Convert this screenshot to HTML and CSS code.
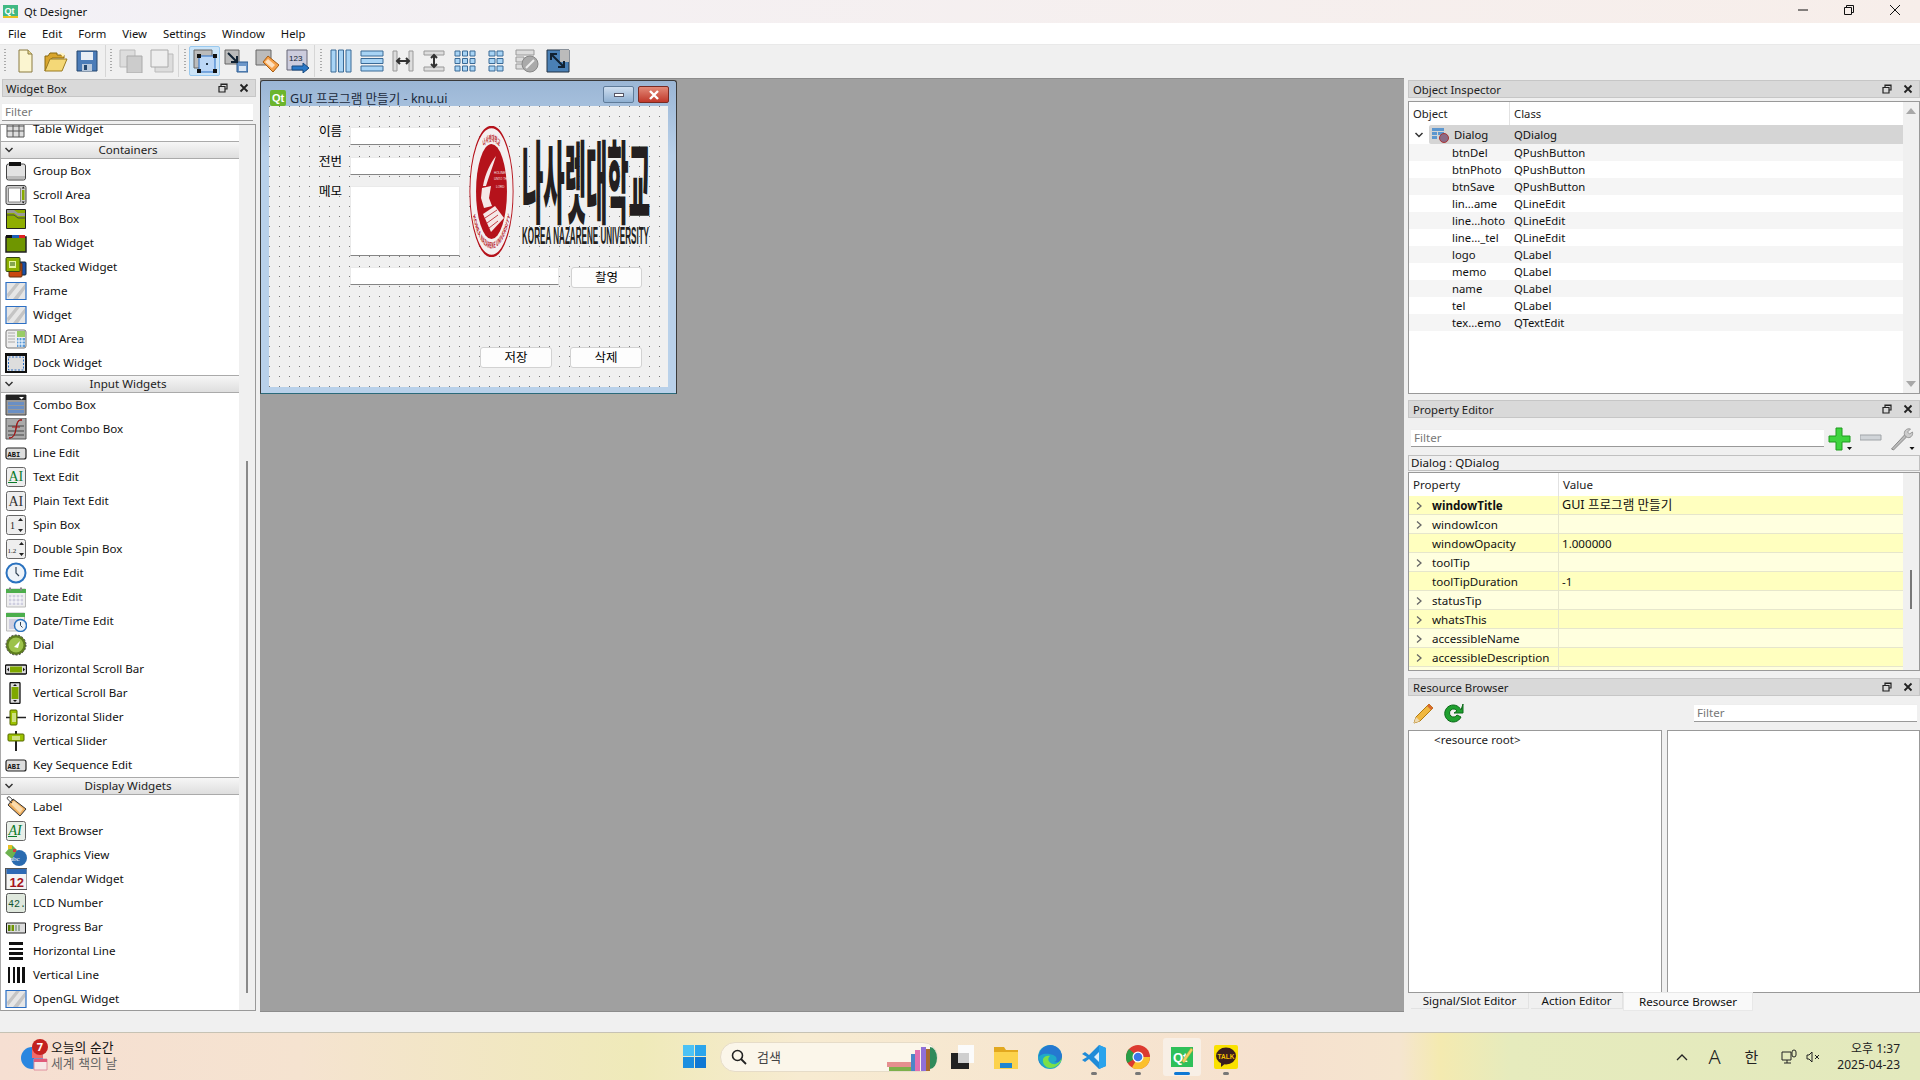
FILE: index.html
```html
<!DOCTYPE html>
<html lang="ko">
<head>
<meta charset="utf-8">
<title>Qt Designer</title>
<link rel="stylesheet" href="styles.css">
</head>
<body>
<svg class="sprite" xmlns="http://www.w3.org/2000/svg">
  <symbol id="chev-d" viewBox="0 0 10 10"><path d="M1.5 3 5 6.5 8.500 3" fill="none" stroke="#333" stroke-width="1.500"/></symbol>
  <symbol id="chev-r" viewBox="0 0 10 10"><path d="M3 1.500 7 5 3 8.500" fill="none" stroke="#666" stroke-width="1.300"/></symbol>
  <symbol id="float" viewBox="0 0 10 10"><path d="M3 3V1h6v5H7M1 3.500h6V9H1z" fill="none" stroke="#222" stroke-width="1.200"/><path d="M3 1h6v1H3zM1 3h6v1H1z" fill="#222"/></symbol>
  <symbol id="close" viewBox="0 0 10 10"><path d="M1.500 1.500l7 7M8.500 1.500l-7 7" stroke="#222" stroke-width="1.800"/></symbol>
  <symbol id="i-table" viewBox="0 0 22 22"><path d="M2 3h17v16H2z" fill="#ddd" stroke="#555"/><path d="M2 8h17M2 13h17M8 3v16M14 3v16" stroke="#555"/></symbol>
  <symbol id="i-group" viewBox="0 0 22 22"><rect x="1.500" y="4" width="19" height="16" rx="2" fill="#e2e2e2" stroke="#444"/><path d="M4 2h12v4H4z" fill="#111"/><path d="M2 16h18v3H2z" fill="#bbb"/></symbol>
  <symbol id="i-scroll" viewBox="0 0 22 22"><rect x="1" y="1.500" width="20" height="19" rx="2" fill="#ccc" stroke="#444"/><path d="M3.500 4h12v14h-12z" fill="#fff" stroke="#888"/><path d="M17 6h2.500v10H17z" fill="#8a0"/><path d="M18.200 2.500l-1.500 2h3zM18.200 19.500l-1.500-2h3z" fill="#111"/></symbol>
  <symbol id="i-toolbox" viewBox="0 0 22 22"><path d="M1.500 1.500h19v19h-19z" fill="#8fae00" stroke="#222"/><path d="M2 2h7l4 3h7v3H13L9 5H2z" fill="#999"/><path d="M2 7h7l4 3h7" fill="none" stroke="#444"/></symbol>
  <symbol id="i-tab" viewBox="0 0 22 22"><path d="M1 5h20v15H1z" fill="#6f9600" stroke="#222" stroke-width="1.500"/><path d="M7 3h7v3H7z" fill="#1b5db5"/><path d="M14 3h6v3h-6z" fill="#d22"/><path d="M1 3h6v3H1z" fill="#111"/></symbol>
  <symbol id="i-stack" viewBox="0 0 22 22"><rect x="8" y="6" width="13" height="13" rx="1" fill="#1a50a8" stroke="#123"/><rect x="4" y="7" width="13" height="14" rx="1" fill="#c9470f" stroke="#631"/><rect x="1" y="1.500" width="14" height="14" rx="1" fill="#8cb000" stroke="#341"/><path d="M4 5h7v7H4z" fill="#e6f5a0"/><path d="M5 7h5M5 9h5" stroke="#250"/></symbol>
  <symbol id="i-frame" viewBox="0 0 22 22"><path d="M1 2.500h20v17H1z" fill="#e6e6e6" stroke="#2c6fc4" stroke-width="1.200"/><path d="M2 14 11 3h4L3 18zM8 19 20 4v5L13 19z" fill="#c4c4c4"/></symbol>
  <symbol id="i-mdi" viewBox="0 0 22 22"><rect x="1" y="2" width="20" height="18" rx="2" fill="#eee" stroke="#777"/><path d="M12 3h8v6h-8z" fill="#9c6"/><path d="M12 10h8v9h-8z" fill="#5a9ad8"/><path d="M3 5h7M3 8h7M3 11h7M3 14h7" stroke="#aaa"/><path d="M14 10v9M17 10v9M12 13h8M12 16h8" stroke="#fff"/></symbol>
  <symbol id="i-dock" viewBox="0 0 22 22"><path d="M0 1h22v20H0z" fill="#111"/><path d="M2 4h18v15H2z" fill="#e4e4e4"/><path d="M3.500 5h15v13h-15z" fill="#ddd" stroke="#2c6fc4" stroke-dasharray="2 1.500"/></symbol>
  <symbol id="i-combo" viewBox="0 0 22 22"><path d="M1 1h20v20H1z" fill="#999" stroke="#444"/><path d="M1 1h20v5H1z" fill="#222"/><path d="M14 3h5l-2.500 2.500z" fill="#fff"/><path d="M3 8h16v3H3zM3 12h16v3H3zM3 16h16v3H3z" fill="#6a8fc4"/></symbol>
  <symbol id="i-font" viewBox="0 0 22 22"><path d="M1 0h20v21H1z" fill="#aaa" stroke="#555"/><path d="M3 8h16M3 13h16M3 17h16" stroke="#777" stroke-width="2"/><path d="M17 2c-4-1-5 2-6 8s-2 10-7 10c4 0 6-3 7-9s2-9 6-9z" fill="#a01818" stroke="#a01818"/><path d="M7 9h8" stroke="#a01818"/></symbol>
  <symbol id="i-line" viewBox="0 0 22 22"><rect x="1" y="6" width="20" height="11" rx="2" fill="#ddd" stroke="#222" stroke-width="1.200"/><text x="2.500" y="14.500" class="ico-text">ABI</text></symbol>
  <symbol id="i-text" viewBox="0 0 22 22"><rect x="1.500" y="1.500" width="19" height="19" rx="2" fill="#eee" stroke="#666"/><text x="3.500" y="15" class="ico-serif green">AI</text><path d="M3 16.500h9" stroke="#0a7a2a"/></symbol>
  <symbol id="i-plain" viewBox="0 0 22 22"><rect x="1.500" y="1.500" width="19" height="19" rx="2" fill="#eee" stroke="#666"/><text x="3.500" y="15.500" class="ico-serif">AI</text></symbol>
  <symbol id="i-spin" viewBox="0 0 22 22"><rect x="1.500" y="1.500" width="19" height="19" rx="2" fill="#eee" stroke="#666"/><text x="5" y="15" class="ico-small">1</text><path d="M15.500 4l-2.500 3h5zM15.500 18l-2.500-3h5z" fill="#222"/></symbol>
  <symbol id="i-dspin" viewBox="0 0 22 22"><rect x="1.500" y="1.500" width="19" height="19" rx="2" fill="#eee" stroke="#666"/><text x="2.500" y="14.500" class="ico-tiny">1.2</text><path d="M16.500 4l-2.500 3h5zM16.500 18l-2.500-3h5z" fill="#222"/></symbol>
  <symbol id="i-time" viewBox="0 0 22 22"><circle cx="11" cy="11" r="9.500" fill="#eef3f8" stroke="#2a72bf" stroke-width="2"/><path d="M11 5v6l3 3" fill="none" stroke="#345" stroke-width="1.200"/></symbol>
  <symbol id="i-date" viewBox="0 0 22 22"><path d="M1.500 3h19v18h-19z" fill="#eee" stroke="#bbb"/><path d="M1 3h20v4H1z" fill="#4cae4c"/><path d="M4 1.500h2v3H4zM15 1.500h2v3h-2z" fill="#888"/><path d="M4 9h14v10H4z" fill="#cfcfe0"/><path d="M7 9v10M11 9v10M15 9v10M4 12h14M4 16h14" stroke="#fff"/></symbol>
  <symbol id="i-datetime" viewBox="0 0 22 22"><path d="M1.500 3h18v18h-18z" fill="#eee" stroke="#bbb"/><path d="M1 3h19v4H1z" fill="#4cae4c"/><path d="M4 9h14v10H4z" fill="#cfcfe0"/><circle cx="15.500" cy="15.500" r="6" fill="#eef3f8" stroke="#2a72bf" stroke-width="1.500"/><path d="M15.500 12v3.500l2 2" fill="none" stroke="#345"/></symbol>
  <symbol id="i-dial" viewBox="0 0 22 22"><circle cx="11" cy="11" r="10" fill="#5d7d1d" stroke="#444" stroke-dasharray="2 1.500"/><circle cx="11" cy="11" r="7.500" fill="#9cc24a"/><path d="M9 13l6-6-2 7z" fill="#fff"/></symbol>
  <symbol id="i-hsb" viewBox="0 0 22 22"><rect x="0.500" y="7" width="21" height="9" rx="1" fill="#ddd" stroke="#111" stroke-width="1.300"/><path d="M5 8.500h12v6H5z" fill="#7fa800"/><path d="M2 11.500l2-2v4zM20 11.500l-2-2v4z" fill="#111"/></symbol>
  <symbol id="i-vsb" viewBox="0 0 22 22"><rect x="5" y="0.500" width="10" height="21" rx="1" fill="#ddd" stroke="#111" stroke-width="1.300"/><path d="M6.500 5h7v12h-7z" fill="#7fa800"/><path d="M10 2l-2 2h4zM10 20l-2-2h4z" fill="#111"/></symbol>
  <symbol id="i-hsl" viewBox="0 0 22 22"><path d="M1 11.500h20" stroke="#222" stroke-width="1.500"/><rect x="5" y="4" width="7" height="15" rx="1" fill="#9cc200" stroke="#560"/><path d="M8 7v9M10 7v9" stroke="#fff"/></symbol>
  <symbol id="i-vsl" viewBox="0 0 22 22"><path d="M11 1v20" stroke="#222" stroke-width="2"/><rect x="3" y="4" width="16" height="7" rx="1" fill="#9cc200" stroke="#560"/><path d="M7 7h8M7 9h8" stroke="#fff"/></symbol>
  <symbol id="i-tag" viewBox="0 0 22 22"><path d="M8 3 21 13l-6 7L3 9z" fill="#f0b060" stroke="#333"/><path d="M9 5 18 13l-3 4-9-9z" fill="#fbdcae"/><path d="M7 7C3 4 1 2 3 1s4 2 5 4" fill="none" stroke="#333"/></symbol>
  <symbol id="i-browser" viewBox="0 0 22 22"><rect x="1.500" y="1.500" width="19" height="19" rx="2" fill="#e8efe8" stroke="#666"/><text x="3.500" y="14.500" class="ico-serif green ital">AI</text><path d="M3 16.500h9" stroke="#0a7a2a"/></symbol>
  <symbol id="i-graphics" viewBox="0 0 22 22"><circle cx="14" cy="14" r="8" fill="#2a6bb0"/><path d="M0 9 7 1l5 5-5 9z" fill="#6db24f"/><path d="M3 1h4v4H3z" fill="#e8c020"/><path d="M8 5h3v3H8z" fill="#d04040"/><text x="5" y="17" class="ico-tiny white">abc</text></symbol>
  <symbol id="i-cal" viewBox="0 0 22 22"><path d="M0 0h22v22H0z" fill="#555"/><path d="M1.500 1h20v20h-20z" fill="#f4f4f4"/><path d="M1.500 1h20v5h-20z" fill="#2e6ab5"/><text x="4.500" y="18.500" class="ico-cal">12</text></symbol>
  <symbol id="i-lcd" viewBox="0 0 22 22"><rect x="1.500" y="1.500" width="19" height="19" rx="2" fill="#dfe8dd" stroke="#555"/><text x="3" y="14.500" class="ico-lcd">42.</text></symbol>
  <symbol id="i-progress" viewBox="0 0 22 22"><path d="M1.500 7h19v10h-19z" fill="#ddd" stroke="#222"/><path d="M3 9h2.500v6H3z" fill="#567a00"/><path d="M6.500 9H9v6H6.500z" fill="#6f9600"/><path d="M10 9h2v6h-2zM13 9h2v6h-2z" fill="#9a9"/></symbol>
  <symbol id="i-hline" viewBox="0 0 22 22"><path d="M4 2h14v3H4zM4 8h14v2H4zM4 12h14v3H4zM4 17h14v3H4z" fill="#111"/></symbol>
  <symbol id="i-vline" viewBox="0 0 22 22"><path d="M3 3h2v16H3zM8 3h2v16H8zM12 3h3v16h-3zM17 3h3v16h-3z" fill="#111"/></symbol>
  <symbol id="t-new" viewBox="0 0 24 24"><path d="M6 1h9l4 4v18H6z" fill="#fbf5d0" stroke="#8a7a40"/><path d="M15 1v4h4" fill="#e8d890" stroke="#8a7a40"/></symbol>
  <symbol id="t-open" viewBox="0 0 24 24"><path d="M1 22V7h3l2-3h7v2h7v3H8z" fill="#d9a52c" stroke="#8a6a10"/><path d="M1 22 6 10h17l-5 12z" fill="#f4d877" stroke="#9a7a20"/><path d="M15 3l6 2-2 3z" fill="#fff3c0"/></symbol>
  <symbol id="t-save" viewBox="0 0 24 24"><path d="M2 2h20v20H2z" fill="#4b7cb8" stroke="#24476f"/><path d="M6 3h12v8H6z" fill="#e8eef5"/><path d="M7 15h10v7H7z" fill="#b9c9dc"/><path d="M9 16h3v5H9z" fill="#24476f"/></symbol>
  <symbol id="t-copy1" viewBox="0 0 24 24"><path d="M1 1h15v17H1z" fill="#ddd" stroke="#bbb"/><path d="M8 7h15v17H8z" fill="#ccc" stroke="#aaa"/></symbol>
  <symbol id="t-copy2" viewBox="0 0 24 24"><path d="M5 5h18v18H5z" fill="#ddd" stroke="#bbb"/><path d="M1 1h17v17H1z" fill="#eee" stroke="#aaa"/></symbol>
  <symbol id="t-edit" viewBox="0 0 24 24"><path d="M1 1h18v18H1z" fill="#bbb" stroke="#666"/><path d="M6 7h16v16H6z" fill="#bcd7f6" stroke="#2a6fc4"/><path d="M4 5h4v4H4zM20 5h4v4h-4zM4 20h4v4H4zM20 20h4v4h-4z" fill="#111"/><path d="M13 14h2v2h-2z" fill="#234"/></symbol>
  <symbol id="t-signal" viewBox="0 0 24 24"><path d="M1 1h14v14H1z" fill="#bbb" stroke="#666"/><path d="M13 13h11v10H13z" fill="#6d97c9" stroke="#2a5a90"/><path d="M15 17h7v5h-7z" fill="#dce8f5"/><path d="M4 4l9 9m0-6v6H7" fill="none" stroke="#123" stroke-width="2"/></symbol>
  <symbol id="t-buddy" viewBox="0 0 24 24"><path d="M1 1h15v15H1z" fill="#bbb" stroke="#666"/><path d="M13 7 24 16l-6 7L8 13z" fill="#f6a14a" stroke="#a55a10" /><path d="M13 10l7 6-3 3-7-6z" fill="#fde0c0"/></symbol>
  <symbol id="t-tab" viewBox="0 0 24 24"><path d="M1 1h20v20H1z" fill="#ccd" stroke="#667"/><text x="3" y="12" class="ico-tab">123</text><path d="M6 17h11v-3l6 5-6 5v-3H6z" fill="#2a78c8" stroke="#174a80"/></symbol>
  <symbol id="t-lh" viewBox="0 0 24 24"><path d="M2 1h5v22H2zM9.500 1h5v22h-5zM17 1h5v22h-5z" fill="#a8d4f5" stroke="#3a6a96"/></symbol>
  <symbol id="t-lv" viewBox="0 0 24 24"><path d="M1 2h22v5H1zM1 9.500h22v5H1zM1 17h22v5H1z" fill="#a8d4f5" stroke="#3a6a96"/></symbol>
  <symbol id="t-sh" viewBox="0 0 24 24"><path d="M2 2h4v20H2zM18 2h4v20h-4z" fill="#ddd" stroke="#999"/><path d="M6 12h12M9 9l-3 3 3 3M15 9l3 3-3 3" fill="none" stroke="#333" stroke-width="2"/></symbol>
  <symbol id="t-sv" viewBox="0 0 24 24"><path d="M2 2h20v4H2zM2 18h20v4H2z" fill="#ddd" stroke="#999"/><path d="M12 6v12M9 9l3-3 3 3M9 15l3 3 3-3" fill="none" stroke="#333" stroke-width="2"/></symbol>
  <symbol id="t-grid" viewBox="0 0 24 24"><path d="M2 2h5v5H2zM9.500 2h5v5h-5zM17 2h5v5h-5zM2 9.500h5v5H2zM9.500 9.500h5v5h-5zM17 9.500h5v5h-5zM2 17h5v5H2zM9.500 17h5v5h-5zM17 17h5v5h-5z" fill="#a8d4f5" stroke="#3a6a96"/></symbol>
  <symbol id="t-form" viewBox="0 0 24 24"><path d="M5 2h6v5H5zM13 2h6v5h-6zM5 9.500h6v5H5zM13 9.500h6v5h-6zM5 17h6v5H5zM13 17h6v5h-6z" fill="#a8d4f5" stroke="#3a6a96"/></symbol>
  <symbol id="t-break" viewBox="0 0 24 24"><path d="M1 1h18v5H1zM1 8h8v5H1zM1 15h8v5H1z" fill="#ddd" stroke="#999"/><circle cx="15" cy="15" r="8" fill="#aaa" stroke="#888"/><path d="M11 19l8-8" stroke="#eee" stroke-width="2"/></symbol>
  <symbol id="t-adjust" viewBox="0 0 24 24"><path d="M1 1h22v22H1z" fill="#4a80b5" stroke="#234"/><path d="M14 1h9v12H14z" fill="#bbb"/><path d="M5 5l13 13M5 11V5h6M18 12v6h-6" fill="none" stroke="#123" stroke-width="2"/></symbol>
</svg>

<header class="titlebar">
  <svg class="tb-appicon" viewBox="0 0 15 15"><path d="M0 1h15v11H0z" fill="#41b883"/><path d="M0 12h15v2H0z" fill="#e8c020"/><text x="1.500" y="10" class="qt-text">Qt</text></svg>
  <span class="titlebar-text">Qt Designer</span>
  <div class="winctl">
    <svg viewBox="0 0 12 12"><path d="M1 6h10" stroke="#111"/></svg>
    <svg viewBox="0 0 12 12"><path d="M1.500 3.500h7v7h-7zM3.500 3.500v-2h7v7h-2" fill="none" stroke="#111"/></svg>
    <svg viewBox="0 0 12 12"><path d="M1 1l10 10M11 1 1 11" stroke="#111"/></svg>
  </div>
</header>

<nav class="menubar">
  <span>File</span><span>Edit</span><span>Form</span><span>View</span><span>Settings</span><span>Window</span><span>Help</span>
</nav>

<div class="toolbar">
  <div class="tb-group tb-group-first">
    <i class="tb-handle"></i>
    <span class="tb-btn"><svg><use href="#t-new"/></svg></span>
    <span class="tb-btn"><svg><use href="#t-open"/></svg></span>
    <span class="tb-btn"><svg><use href="#t-save"/></svg></span>
  </div>
  <div class="tb-group tb-group-second">
    <i class="tb-handle"></i>
    <span class="tb-btn"><svg><use href="#t-copy1"/></svg></span>
    <span class="tb-btn"><svg><use href="#t-copy2"/></svg></span>
  </div>
  <div class="tb-group">
    <i class="tb-handle"></i>
    <span class="tb-btn tb-btn-active"><svg><use href="#t-edit"/></svg></span>
    <span class="tb-btn"><svg><use href="#t-signal"/></svg></span>
    <span class="tb-btn"><svg><use href="#t-buddy"/></svg></span>
    <span class="tb-btn"><svg><use href="#t-tab"/></svg></span>
  </div>
  <div class="tb-group tb-group-last">
    <i class="tb-handle"></i>
    <span class="tb-btn"><svg><use href="#t-lh"/></svg></span>
    <span class="tb-btn"><svg><use href="#t-lv"/></svg></span>
    <span class="tb-btn"><svg><use href="#t-sh"/></svg></span>
    <span class="tb-btn"><svg><use href="#t-sv"/></svg></span>
    <span class="tb-btn"><svg><use href="#t-grid"/></svg></span>
    <span class="tb-btn"><svg><use href="#t-form"/></svg></span>
    <span class="tb-btn"><svg><use href="#t-break"/></svg></span>
    <span class="tb-btn"><svg><use href="#t-adjust"/></svg></span>
  </div>
</div>

<main class="workspace">
  <aside class="dock-left">
    <div class="dock-title"><span>Widget Box</span><svg class="dock-float"><use href="#float"/></svg><svg class="dock-close"><use href="#close"/></svg></div>
    <div class="filter filter-left">Filter</div>
    <div class="wb">
      <div class="wb-list">
        <div class="wb-inner">
          <div class="wb-row"><svg><use href="#i-table"/></svg>Table Widget</div>
          <div class="wb-head"><svg><use href="#chev-d"/></svg><span>Containers</span></div>
          <div class="wb-row"><svg><use href="#i-group"/></svg>Group Box</div>
          <div class="wb-row"><svg><use href="#i-scroll"/></svg>Scroll Area</div>
          <div class="wb-row"><svg><use href="#i-toolbox"/></svg>Tool Box</div>
          <div class="wb-row"><svg><use href="#i-tab"/></svg>Tab Widget</div>
          <div class="wb-row"><svg><use href="#i-stack"/></svg>Stacked Widget</div>
          <div class="wb-row"><svg><use href="#i-frame"/></svg>Frame</div>
          <div class="wb-row"><svg><use href="#i-frame"/></svg>Widget</div>
          <div class="wb-row"><svg><use href="#i-mdi"/></svg>MDI Area</div>
          <div class="wb-row"><svg><use href="#i-dock"/></svg>Dock Widget</div>
          <div class="wb-head"><svg><use href="#chev-d"/></svg><span>Input Widgets</span></div>
          <div class="wb-row"><svg><use href="#i-combo"/></svg>Combo Box</div>
          <div class="wb-row"><svg><use href="#i-font"/></svg>Font Combo Box</div>
          <div class="wb-row"><svg><use href="#i-line"/></svg>Line Edit</div>
          <div class="wb-row"><svg><use href="#i-text"/></svg>Text Edit</div>
          <div class="wb-row"><svg><use href="#i-plain"/></svg>Plain Text Edit</div>
          <div class="wb-row"><svg><use href="#i-spin"/></svg>Spin Box</div>
          <div class="wb-row"><svg><use href="#i-dspin"/></svg>Double Spin Box</div>
          <div class="wb-row"><svg><use href="#i-time"/></svg>Time Edit</div>
          <div class="wb-row"><svg><use href="#i-date"/></svg>Date Edit</div>
          <div class="wb-row"><svg><use href="#i-datetime"/></svg>Date/Time Edit</div>
          <div class="wb-row"><svg><use href="#i-dial"/></svg>Dial</div>
          <div class="wb-row"><svg><use href="#i-hsb"/></svg>Horizontal Scroll Bar</div>
          <div class="wb-row"><svg><use href="#i-vsb"/></svg>Vertical Scroll Bar</div>
          <div class="wb-row"><svg><use href="#i-hsl"/></svg>Horizontal Slider</div>
          <div class="wb-row"><svg><use href="#i-vsl"/></svg>Vertical Slider</div>
          <div class="wb-row"><svg><use href="#i-line"/></svg>Key Sequence Edit</div>
          <div class="wb-head"><svg><use href="#chev-d"/></svg><span>Display Widgets</span></div>
          <div class="wb-row"><svg><use href="#i-tag"/></svg>Label</div>
          <div class="wb-row"><svg><use href="#i-browser"/></svg>Text Browser</div>
          <div class="wb-row"><svg><use href="#i-graphics"/></svg>Graphics View</div>
          <div class="wb-row"><svg><use href="#i-cal"/></svg>Calendar Widget</div>
          <div class="wb-row"><svg><use href="#i-lcd"/></svg>LCD Number</div>
          <div class="wb-row"><svg><use href="#i-progress"/></svg>Progress Bar</div>
          <div class="wb-row"><svg><use href="#i-hline"/></svg>Horizontal Line</div>
          <div class="wb-row"><svg><use href="#i-vline"/></svg>Vertical Line</div>
          <div class="wb-row"><svg><use href="#i-frame"/></svg>OpenGL Widget</div>
        </div>
      </div>
      <div class="wb-scroll"><i></i></div>
    </div>
  </aside>

  <section class="mdi">
    <div class="form-window">
      <div class="form-title">
        <span class="qt-badge">Qt</span>
        <span class="form-title-text">GUI 프로그램 만들기 - knu.ui</span>
        <span class="form-btn form-min"><i></i></span>
        <span class="form-btn form-close"><svg viewBox="0 0 12 10"><path d="M2 1l8 8M10 1 2 9" stroke="#fff" stroke-width="2.400"/></svg></span>
      </div>
      <div class="form-canvas">
        <div class="form-top">
          <div class="form-fields">
            <div class="field"><label>이름</label><div class="input"></div></div>
            <div class="field"><label>전번</label><div class="input"></div></div>
            <div class="field field-memo"><label>메모</label><div class="input input-memo"></div></div>
          </div>
          <svg class="logo" viewBox="0 0 181 131">
            <defs><path id="seal-top" d="M-50 0A50 50 0 0 1 50 0"/><path id="seal-bottom" d="M-57 0A57 57 0 0 0 57 0"/></defs>
            <g transform="translate(22.500 65.500) scale(.36 1)">
              <ellipse rx="60" ry="64.500" fill="#f4f0f0" stroke="#b5121b" stroke-width="2.500"/>
              <ellipse rx="43" ry="47.500" fill="#b5121b"/>
              <text class="seal-text"><textPath href="#seal-top" startOffset="50%" text-anchor="middle">나사렛대학교</textPath></text>
              <text class="seal-text"><textPath href="#seal-bottom" startOffset="50%" text-anchor="middle">KOREA NAZARENE UNIVERSITY</textPath></text>
            </g>
            <path d="M27 30C22 36 16 48 14 60l3 0C20 50 24 40 27 30zM13 62l9-2-2 12 3 8-8 2-3-10z" fill="#f5e8e8"/>
            <path d="M14 88 26 80l9 12-13 14z" fill="#f5e8e8"/>
            <path d="M16 92l12-8M18 97l11-8M20 102l9-7" stroke="#b5121b" stroke-width=".8"/>
            <text class="seal-motto" x="25" y="48">HOLINESS</text>
            <text class="seal-motto" x="25" y="54">UNTO THE</text>
            <text class="seal-motto" x="27" y="62">LORD</text>
            <text class="big-name" transform="translate(53 89.500) scale(1 3.900)" textLength="128" lengthAdjust="spacingAndGlyphs">나사렛대학교</text>
            <text class="big-en" transform="translate(53 118) scale(1 2.700)" textLength="127" lengthAdjust="spacingAndGlyphs">KOREA NAZARENE UNIVERSITY</text>
          </svg>
        </div>
        <div class="photo-row">
          <div class="input input-wide"></div>
          <button class="push" type="button">촬영</button>
        </div>
        <div class="action-row">
          <button class="push" type="button">저장</button>
          <button class="push" type="button">삭제</button>
        </div>
      </div>
    </div>
  </section>

  <aside class="dock-right">
    <div class="dock-title dock-title-oi"><span>Object Inspector</span><svg class="dock-float"><use href="#float"/></svg><svg class="dock-close"><use href="#close"/></svg></div>
    <div class="oi">
      <div class="oi-main">
        <div class="oi-header"><span>Object</span><span>Class</span></div>
        <div class="oi-root"><span class="oi-arrow"><svg><use href="#chev-d"/></svg></span><div class="oi-root-sel"><svg viewBox="0 0 17 16"><path d="M0 1h12v3H0zM0 5h5v3H0zM6 5h6v3H6zM0 9h5v3H0z" fill="#5d97cf"/><circle cx="12" cy="11" r="4.500" fill="#8b6a86" stroke="#a33"/></svg><span class="oi-root-name">Dialog</span><span>QDialog</span></div></div>
        <div class="oi-row"><span>btnDel</span><span>QPushButton</span></div>
        <div class="oi-row"><span>btnPhoto</span><span>QPushButton</span></div>
        <div class="oi-row"><span>btnSave</span><span>QPushButton</span></div>
        <div class="oi-row"><span>lin...ame</span><span>QLineEdit</span></div>
        <div class="oi-row"><span>line...hoto</span><span>QLineEdit</span></div>
        <div class="oi-row"><span>line..._tel</span><span>QLineEdit</span></div>
        <div class="oi-row"><span>logo</span><span>QLabel</span></div>
        <div class="oi-row"><span>memo</span><span>QLabel</span></div>
        <div class="oi-row"><span>name</span><span>QLabel</span></div>
        <div class="oi-row"><span>tel</span><span>QLabel</span></div>
        <div class="oi-row"><span>tex...emo</span><span>QTextEdit</span></div>
      </div>
      <div class="oi-scroll"><i class="up"></i><i class="down"></i></div>
    </div>

    <div class="dock-title dock-title-pe"><span>Property Editor</span><svg class="dock-float"><use href="#float"/></svg><svg class="dock-close"><use href="#close"/></svg></div>
    <div class="pe-tools">
      <div class="filter filter-pe">Filter</div>
      <svg class="pe-add" viewBox="0 0 24 24"><path d="M8 1h6v8h8v6h-8v8H8v-8H1V9h7z" fill="#3fd43f" stroke="#1f9a1f"/><path d="M19 20h5l-2.500 3z" fill="#111"/></svg>
      <svg class="pe-minus" viewBox="0 0 22 22"><path d="M0 8h21v5H0z" fill="#d0d4d8" stroke="#a0a4a8"/></svg>
      <svg class="pe-wrench" viewBox="0 0 24 24"><path d="M1 22 14 8l2 2L3 23z" fill="#bbb" stroke="#888"/><path d="M14 8c-1-4 2-7 6-6l-3 3 2 2 3-2c1 4-3 7-6 5z" fill="#ccc" stroke="#999"/><path d="M19 20h5l-2.500 3z" fill="#111"/></svg>
    </div>
    <div class="pe-class">Dialog : QDialog</div>
    <div class="pe">
      <div class="pe-main">
        <div class="pe-header"><span>Property</span><span>Value</span></div>
        <div class="pe-row"><span><svg><use href="#chev-r"/></svg><b>windowTitle</b></span><span class="pe-cjk">GUI 프로그램 만들기</span></div>
        <div class="pe-row"><span><svg><use href="#chev-r"/></svg>windowIcon</span><span></span></div>
        <div class="pe-row"><span><i class="pe-noarrow"></i>windowOpacity</span><span>1.000000</span></div>
        <div class="pe-row"><span><svg><use href="#chev-r"/></svg>toolTip</span><span></span></div>
        <div class="pe-row"><span><i class="pe-noarrow"></i>toolTipDuration</span><span>-1</span></div>
        <div class="pe-row"><span><svg><use href="#chev-r"/></svg>statusTip</span><span></span></div>
        <div class="pe-row"><span><svg><use href="#chev-r"/></svg>whatsThis</span><span></span></div>
        <div class="pe-row"><span><svg><use href="#chev-r"/></svg>accessibleName</span><span></span></div>
        <div class="pe-row"><span><svg><use href="#chev-r"/></svg>accessibleDescription</span><span></span></div>
        <div class="pe-row"><span></span><span></span></div>
      </div>
      <div class="pe-scroll"><i></i></div>
    </div>

    <div class="dock-title dock-title-rb"><span>Resource Browser</span><svg class="dock-float"><use href="#float"/></svg><svg class="dock-close"><use href="#close"/></svg></div>
    <div class="rb-tools">
      <svg class="rb-pencil" viewBox="0 0 22 22"><path d="M1 21l2-6L16 2l4 4L7 19z" fill="#f0b840" stroke="#b07a10"/><path d="M1 21l2-6 4 4z" fill="#eed9b0"/><path d="M16 2l4 4-2 2-4-4z" fill="#d86a30"/></svg>
      <svg class="rb-refresh" viewBox="0 0 22 22"><path d="M19 8A8.500 8.500 0 1 0 19 15l-4-2a4 4 0 1 1 0-4l-3 2h9V2z" fill="#1fa02f" stroke="#0d6a1a"/></svg>
      <div class="filter filter-rb">Filter</div>
    </div>
    <div class="rb-panels">
      <div class="rb-panel rb-tree">&lt;resource root&gt;</div>
      <div class="rb-panel"></div>
    </div>
    <div class="rb-tabs">
      <span class="rb-tab rb-tab-signal">Signal/Slot Editor</span>
      <span class="rb-tab rb-tab-action">Action Editor</span>
      <span class="rb-tab rb-tab-on">Resource Browser</span>
    </div>
  </aside>
</main>

<div class="strip"></div>

<footer class="taskbar">
  <div class="tk-widget">
    <svg class="tk-moment" viewBox="0 0 36 34"><circle cx="14" cy="20" r="11" fill="#2a86e0"/><path d="M14 9a11 11 0 0 1 11 11H14z" fill="#f06a6a"/><path d="M16 21h13v11H16z" fill="#f7e7e7" stroke="#e090a0"/><path d="M16 21h13v3H16z" fill="#e05a7a"/><circle cx="22" cy="9" r="8" fill="#c4221f"/><text x="22" y="13" class="tk-badge">7</text></svg>
    <div class="tk-widget-text"><span>오늘의 순간</span><span class="tk-sub">세계 책의 날</span></div>
  </div>
  <div class="tk-center">
    <svg class="tk-start" viewBox="0 0 24 24"><path d="M0 0h11.500v11.500H0z" fill="#4cc2f5"/><path d="M12.500 0H24v11.500H12.500z" fill="#2ba5ec"/><path d="M0 12.500h11.500V24H0z" fill="#1b8fe0"/><path d="M12.500 12.500H24V24H12.500z" fill="#0f78d4"/></svg>
    <div class="tk-search">
      <svg viewBox="0 0 16 16"><circle cx="6.500" cy="6.500" r="5" fill="none" stroke="#222" stroke-width="1.600"/><path d="M10 10l5 5" stroke="#222" stroke-width="1.800"/></svg>
      <span>검색</span>
      <svg class="tk-books" viewBox="0 0 50 26"><path d="M0 17h24v5H0z" fill="#e58f8f"/><path d="M2 22h24v4H2z" fill="#7db04a"/><path d="M24 9h4v17h-4z" fill="#4a86c8"/><path d="M28 5h5v21h-5z" fill="#e070b0"/><path d="M34 2h5v24h-5z" fill="#9070d8"/><path d="M39 4h4v22h-4z" fill="#a86a30"/><path d="M43 2a7 11 0 0 1 0 22z" fill="#2f8a5a"/></svg>
    </div>
    <div class="tk-apps">
      <span class="tk-app"><svg viewBox="0 0 24 24"><path d="M8 0h17v18H8z" fill="#fbfbfb"/><path d="M1 8h18v17H1z" fill="#222"/><path d="M8 8h11v10H8z" fill="#cfcfcf"/></svg></span>
      <span class="tk-app"><svg viewBox="0 0 24 24"><path d="M0 2h10l2 3h12v20H0z" fill="#e2a81f"/><path d="M0 7h24v18H0z" fill="#fcd24c"/><path d="M6 18h12v5H6z" fill="#1f86d0"/></svg></span>
      <span class="tk-app"><svg viewBox="0 0 24 24"><circle cx="12" cy="12" r="12" fill="#1fa9c9"/><path d="M12 0a12 12 0 0 1 12 12c0 4-4 6-8 5 3-1 3-3 2-5S8 7 3 10 1 20 8 23A12 12 0 0 1 12 0z" fill="#2578d0"/><path d="M24 12c0 6-6 11-12 11-3 0-8-3-7-9 1-3 5-4 7-3-3 2-2 7 3 8 4 1 8-3 9-7z" fill="#7be04a"/></svg></span>
      <span class="tk-app tk-dot"><svg viewBox="0 0 24 24"><path d="M17 0l7 3v18l-7 3L7 14l-4 3-3-2 5-3-5-3 3-2 4 3z" fill="#1f8bd8"/><path d="M17 0l7 3v18l-7 3z" fill="#2aa3ec"/><path d="M17 7l-5 5 5 5z" fill="#fff" opacity=".85"/></svg></span>
      <span class="tk-app tk-dot"><svg viewBox="0 0 24 24"><circle cx="12" cy="12" r="12" fill="#dd3a2f"/><path d="M12 12 1.500 18A12 12 0 0 1 3 4z" fill="#2a9d46"/><path d="M12 12H24a12 12 0 0 1-18 10.500z" fill="#fbc02d"/><circle cx="12" cy="12" r="5.500" fill="#fff"/><circle cx="12" cy="12" r="4.300" fill="#3b78e7"/></svg></span>
      <span class="tk-app tk-app-active"><svg viewBox="0 0 24 24"><path d="M1 2h22v20H1z" fill="#2fc05a"/><text x="3" y="17" class="tk-qt">Qt</text><path d="M14 18 23 5l-2-2-9 13z" fill="#f0d060" stroke="#b0a030" stroke-width=".5"/></svg><i></i></span>
      <span class="tk-app tk-dot"><svg viewBox="0 0 24 24"><rect width="24" height="24" rx="2" fill="#fae100"/><ellipse cx="12" cy="11" rx="10" ry="8.500" fill="#3a1d1d"/><path d="M7 17v5l5-4z" fill="#3a1d1d"/><text x="12" y="13.500" class="tk-talk">TALK</text></svg></span>
    </div>
  </div>
  <div class="tk-tray">
    <svg class="tr-up" viewBox="0 0 12 8"><path d="M1 7l5-5 5 5" fill="none" stroke="#222" stroke-width="1.300"/></svg>
    <span class="tr-a">A</span>
    <span class="tr-han">한</span>
    <svg class="tr-net" viewBox="0 0 16 16"><path d="M1 3h9v8H1zM3 14h7M6 11v3" fill="none" stroke="#222"/><rect x="11" y="1" width="4" height="7" rx="2" fill="none" stroke="#222"/></svg>
    <svg class="tr-vol" viewBox="0 0 16 12"><path d="M1 4h2l3-3v10L3 8H1zM9 4l4 4M13 4 9 8" fill="none" stroke="#222"/></svg>
    <div class="tr-clock"><span>오후 1:37</span><span>2025-04-23</span></div>
  </div>
</footer>
</body>
</html>
```
FILE: styles.css
```css
* { box-sizing: border-box; }
html, body { margin: 0; padding: 0; }
body {
  width: 1920px; height: 1080px; overflow: hidden;
  display: flex; flex-direction: column;
  background: #f0f0f0; color: #111;
  font: 11.6px/1 "Noto Sans", "Noto Sans CJK KR", sans-serif;
}
i { display: block; }
.sprite { display: none; }

/* icon text */
.ico-text { font: bold 7px "Liberation Mono", monospace; fill: #111; }
.ico-serif { font: 14px "Liberation Serif", serif; fill: #333; }
.ico-small { font: 10px "Liberation Serif", serif; fill: #222; }
.ico-tiny { font: 7px "Liberation Serif", serif; fill: #222; }
.green { fill: #0a7a2a; }
.ital { font-style: italic; }
.white { fill: #fff; }
.ico-cal { font: bold 13px "Liberation Sans", sans-serif; fill: #a5121b; }
.ico-lcd { font: 10px "Liberation Mono", monospace; fill: #153; }
.ico-tab { font: 8px "Liberation Sans", sans-serif; fill: #123; }
.qt-text { font: bold 9px "Liberation Sans", sans-serif; fill: #fff; }

/* title */
.titlebar {
  height: 23px; flex: none; display: flex; align-items: center;
  background: linear-gradient(90deg, #f3f1f6, #f7eeea);
  padding-left: 3px;
}
.tb-appicon { width: 15px; height: 15px; }
.titlebar-text { margin-left: 6px; font-size: 11.2px; }
.winctl { margin-left: auto; display: flex; gap: 34px; padding: 0 19px 3px 0; }
.winctl svg { width: 12px; height: 12px; }

.menubar {
  height: 21px; flex: none; display: flex; align-items: center;
  background: #fff; padding-left: 8px; gap: 16px; font-size: 11.3px;
}

.toolbar { height: 34px; flex: none; display: flex; align-items: center; background: #f0f0f0; border-top: 1px solid #e9e9e9; padding-bottom: 2px; }
.tb-group { display: flex; align-items: center; height: 32px; padding: 0 1px 0 5px; border-right: 1px solid #d6d6d6; }
.tb-group-first { padding: 0 3px 0 4px; }
.tb-group-second { padding-left: 4px; }
.tb-group-last { border-right: 0; }
.tb-handle { width: 2px; height: 24px; margin-right: 3px; background-image: linear-gradient(#aaa 1px, transparent 1px); background-size: 2px 3px; }
.tb-btn { width: 31px; height: 30px; display: flex; align-items: center; justify-content: center; }
.tb-btn svg { width: 24px; height: 24px; }
.tb-btn-active { background: #cce4f7; border: 1px solid #99c9ef; border-radius: 2px; }

/* workspace */
.workspace { flex: 1; min-height: 0; display: flex; gap: 4px; }
.dock-left { width: 256px; flex: none; display: flex; flex-direction: column; }
.dock-title {
  height: 18px; flex: none; display: flex; align-items: center;
  background: #d9d9d9; border: 1px solid #c6c6c6;
  font-size: 11.3px; color: #222;
}
.dock-title span { flex: 1; padding-top: 2px; }
.dock-left .dock-title { margin: 1px 0 0 2px; padding-left: 3px; }
.dock-float { width: 10px; height: 10px; margin-right: 11px; }
.dock-close { width: 10px; height: 10px; margin-right: 6px; }
.filter {
  height: 18px; flex: none; display: flex; align-items: center;
  background: #fff; border-bottom: 1px solid #999; border-top: 1px solid #eee;
  padding-left: 3px; color: #777;
}
.filter-left { margin: 6px 3px 0 2px; }

.wb { height: 887px; margin-top: 3px; display: flex; border: 1px solid #999; border-left-color: #aaa; background: #f0f0f0; }
.wb-list { width: 238px; overflow: hidden; background: #fff; }
.wb-inner { margin-top: -8px; }
.wb-row { height: 24px; display: flex; align-items: center; gap: 6px; padding-left: 4px; }
.wb-row svg { width: 22px; height: 22px; flex: none; }
.wb-head {
  height: 18px; display: flex; align-items: center;
  background: linear-gradient(#f6f6f6, #dedede);
  border-top: 1px solid #aaa; border-bottom: 1px solid #aaa;
}
.wb-head svg { width: 10px; height: 10px; margin: 0 3px 0 3px; flex: none; }
.wb-head span { flex: 1; text-align: center; color: #222; }
.wb-scroll { flex: 1; display: flex; justify-content: center; padding: 336px 0 17px; }
.wb-scroll i { width: 2px; background: #8a8a8a; }

.mdi { width: 1144px; flex: none; background: #a0a0a0; position: relative; border-bottom: 1px solid #8c8c8c; border-top: 1px solid #8c8c8c; }

/* form */
.form-window {
  position: absolute; left: 0; top: 1px; width: 417px; height: 314px;
  border: 1px solid #3a3a3a; border-bottom-color: #2a6a7a; border-radius: 3px 3px 0 0;
  background: linear-gradient(#9bb6d5 0, #b9d1ea 75px, #b9d1ea 100%);
  padding: 0 8px;
  display: flex; flex-direction: column;
}
.form-title { height: 25px; flex: none; display: flex; align-items: flex-start; margin-left: 1px; padding-top: 5px; color: #1b2a3c; }
.qt-badge { width: 16px; height: 16px; margin-top: 4px; background: #6cb52d; color: #fff; font: bold 11px/16px "Liberation Sans", sans-serif; text-align: center; border-radius: 2px; }
.form-title-text { margin: 5px 0 0 4px; font-size: 12.6px; line-height: 16px; }
.form-btn { width: 31px; height: 17px; display: flex; align-items: center; justify-content: center; border-radius: 2px; }
.form-min { margin-left: auto; background: linear-gradient(#cfdeef, #8fb0d2); border: 1px solid #5f7b99; }
.form-min i { width: 10px; height: 4px; background: #fff; border: 1px solid #556; }
.form-close { margin: 0 -1px 0 4px; background: linear-gradient(#e38a78, #c0382a); border: 1px solid #7a2a22; }
.form-close svg { width: 12px; height: 10px; }

.form-canvas {
  height: 281px; flex: none;
  background-color: #f0f0f0;
  background-image: radial-gradient(circle at .5px .5px, #777 .6px, transparent .8px);
  background-size: 10px 10px;
  padding: 20px 26px 0 50px;
  font-family: "Noto Sans CJK KR", sans-serif;
  color: #000;
}
.form-top { display: flex; height: 131px; }
.form-fields { width: 142px; padding-top: 1px; display: flex; flex-direction: column; }
.field { display: flex; gap: 8px; margin-bottom: 12px; }
.field-memo { margin-top: -1px; margin-bottom: 0; }
.field label { width: 23px; flex: none; font-size: 12.5px; line-height: 8px; white-space: nowrap; }
.field-memo label { line-height: 10px; }
.input { width: 111px; height: 18px; background: #fff; border-bottom: 1px solid #858585; border-top: 1px solid #eaeaea; border-left: 1px solid #eaeaea; border-right: 1px solid #eaeaea; }
.input-memo { width: 110px; height: 70px; }
.input-wide { width: 209px; flex: none; }
.logo { width: 181px; height: 131px; margin-left: 8px; flex: none; }
.seal-text { font: bold 8.500px "Noto Sans CJK KR", sans-serif; fill: #b5121b; }
.seal-motto { font: 3px "Liberation Sans", sans-serif; fill: #f5e8e8; }
.big-name { font: 900 23px "Noto Sans CJK KR", sans-serif; fill: #231f20; }
.big-en { font: 700 9px "Liberation Sans", sans-serif; fill: #231f20; }
.photo-row { display: flex; gap: 12px; margin: 10px 0 0 31px; }
.action-row { display: flex; gap: 18px; margin-top: 59px; justify-content: flex-end; }
.push { width: 72px; height: 21px; padding: 0; background: #fdfdfd; border: 1px solid #d2d2d2; border-radius: 3px; font: 12.5px/1 "Noto Sans CJK KR", sans-serif; color: #000; }

/* right */
.dock-right { width: 512px; flex: none; display: flex; flex-direction: column; }
.dock-right .dock-title { padding-left: 4px; }
.dock-title-oi { margin-top: 2px; }
.dock-title-pe { margin-top: 6px; }
.dock-title-rb { margin-top: 7px; }

.oi { height: 293px; margin-top: 3px; flex: none; display: flex; border: 1px solid #999; background: #fff; font-size: 11.3px; }
.oi-main { width: 494px; flex: none; }
.oi-header { height: 23px; display: grid; grid-template-columns: 101px 1fr; align-items: center; background: #fff; color: #222; }
.oi-header span:first-child { border-right: 1px solid #e2e2e2; height: 100%; display: flex; align-items: center; padding-left: 4px; }
.oi-header span:last-child { padding-left: 4px; }
.oi-root { height: 19px; display: flex; }
.oi-arrow { width: 20px; flex: none; display: flex; align-items: center; padding-left: 5px; }
.oi-arrow svg { width: 10px; height: 10px; }
.oi-root-sel { flex: 1; display: flex; align-items: center; background: #d5d5d5; border-radius: 2px 0 0 2px; padding-left: 3px; }
.oi-root-sel svg { width: 17px; height: 16px; flex: none; }
.oi-root-name { width: 65px; padding-left: 5px; }
.oi-row { height: 17px; display: grid; grid-template-columns: 105px 1fr; align-items: center; }
.oi-row:nth-child(odd) { background: #f5f5f5; }
.oi-row span:first-child { padding-left: 43px; white-space: nowrap; }
.oi-scroll { flex: 1; background: #f0f0f0; display: flex; flex-direction: column; justify-content: space-between; align-items: center; padding: 6px 0; }
.oi-scroll .up { border: 5px solid transparent; border-top: 0; border-bottom: 6px solid #a8a8a8; }
.oi-scroll .down { border: 5px solid transparent; border-bottom: 0; border-top: 6px solid #a8a8a8; }

.pe-tools { height: 37px; flex: none; display: flex; align-items: flex-start; padding: 11px 0 0 3px; }
.filter-pe { width: 413px; }
.pe-add { width: 24px; height: 24px; margin: -2px 0 0 4px; }
.pe-minus { width: 22px; height: 22px; margin: -2px 0 0 8px; }
.pe-wrench { width: 25px; height: 24px; margin: -2px 0 0 8px; }
.pe-class { height: 16px; flex: none; display: flex; align-items: center; border: 1px solid #c0c0c0; padding-left: 2px; color: #111; }
.pe { height: 199px; margin-top: 1px; flex: none; display: flex; border: 1px solid #999; background: #f0f0f0; overflow: hidden; }
.pe-main { width: 494px; flex: none; }
.pe-header { height: 23px; display: grid; grid-template-columns: 150px 1fr; align-items: center; background: #fff; color: #222; }
.pe-header span:first-child { height: 100%; display: flex; align-items: center; padding-left: 4px; border-right: 1px solid #e2e2e2; }
.pe-header span:last-child { padding-left: 4px; }
.pe-row { height: 19px; display: grid; grid-template-columns: 150px 1fr; background: #ffffbf; border-bottom: 1px solid #e6e6cc; }
.pe-row:nth-child(odd) { background: #ffffdf; }
.pe-row span { display: flex; align-items: center; white-space: nowrap; padding-top: 1px; }
.pe-row span:first-child { border-right: 1px solid #e6e6cc; padding-left: 5px; }
.pe-row span:last-child { padding-left: 3px; }
.pe-row .pe-cjk { font-size: 12.6px; }
.pe-row svg { width: 10px; height: 10px; margin-right: 8px; flex: none; }
.pe-noarrow { width: 18px; flex: none; }
.pe-row b { font-weight: 700; }
.pe-scroll { flex: 1; display: flex; justify-content: center; padding-top: 97px; }
.pe-scroll i { width: 2px; height: 39px; background: #777; }

.rb-tools { height: 34px; flex: none; display: flex; align-items: center; padding: 0 3px 0 5px; }
.rb-pencil { width: 22px; height: 22px; }
.rb-refresh { width: 22px; height: 22px; margin-left: 7px; }
.filter-rb { width: 223px; margin-left: auto; }
.rb-panels { height: 263px; flex: none; display: flex; gap: 5px; }
.rb-panel { flex: 1; background: #fff; border: 1px solid #999; }
.rb-tree { flex: none; width: 254px; padding: 3px 0 0 25px; color: #222; }
.rb-tabs { display: flex; height: 19px; flex: none; padding-left: 3px; }
.rb-tab { height: 16px; display: flex; align-items: center; justify-content: center; background: #f0f0f0; border-right: 1px solid #e2e2e2; border-bottom: 1px solid #e2e2e2; }
.rb-tab-signal { width: 118px; margin-right: 2px; }
.rb-tab-action { width: 92px; }
.rb-tab-on { width: 130px; height: 19px; margin-top: -1px; background: #f9f9f9; border: 1px solid #e8e8e8; }

.strip { height: 20px; flex: none; background: #f0f0f0; }

/* taskbar */
.taskbar {
  height: 48px; flex: none; display: grid; grid-template-columns: 683px 1fr auto; align-items: center;
  border-top: 1px solid #c6c2b4;
  background: linear-gradient(90deg, #f6dfd2 0, #f5e3d0 300px, #efeab9 640px, #f7ebd1 800px, #f6e1cf 1280px, #f5e5cf 1400px, #f4eab0 1440px, #e6ebbd 1510px, #e3e9bd 100%);
}
.tk-widget { display: flex; align-items: center; padding-left: 18px; }
.tk-moment { width: 36px; height: 34px; margin-top: -4px; }
.tk-badge { font: bold 11px "Noto Sans", sans-serif; fill: #fff; text-anchor: middle; }
.tk-widget-text { display: flex; flex-direction: column; gap: 3px; margin: -3px 0 0 -3px; font-family: "Noto Sans CJK KR", sans-serif; font-size: 12.8px; }
.tk-sub { color: #666; }
.tk-center { display: flex; align-items: center; }
.tk-start { width: 23px; height: 23px; }
.tk-search {
  width: 218px; height: 30px; margin-left: 14px; display: flex; align-items: center;
  background: #fbf6ea; border: 1px solid #e6dcc8; border-radius: 15px; padding-left: 10px;
  font-family: "Noto Sans CJK KR", sans-serif; font-size: 13px; color: #444;
}
.tk-search > svg:first-child { width: 16px; height: 16px; }
.tk-search span { margin-left: 10px; }
.tk-books { width: 50px; height: 26px; margin: 2px 0 0 auto; }
.tk-apps { display: flex; align-items: center; margin-left: 2px; }
.tk-app { width: 44px; height: 38px; display: flex; align-items: center; justify-content: center; position: relative; border-radius: 3px; }
.tk-app svg { width: 24px; height: 24px; }
.tk-dot::after { content: ""; position: absolute; left: 19px; bottom: 1px; width: 6px; height: 3px; border-radius: 2px; background: #777; }
.tk-app-active { width: 38px; margin: 0 3px; background: #f8efe6; }
.tk-app-active i { position: absolute; left: 11px; bottom: 1px; width: 16px; height: 3px; border-radius: 2px; background: #0f78d4; }
.tk-qt { font: bold 13px "Liberation Sans", sans-serif; fill: #fff; }
.tk-talk { font: bold 6.500px "Liberation Sans", sans-serif; fill: #f5c000; text-anchor: middle; }
.tk-tray { display: flex; align-items: center; padding-right: 20px; color: #222; font-family: "Noto Sans CJK KR", sans-serif; }
.tr-up { width: 12px; height: 8px; }
.tr-a { margin-left: 20px; font: 300 20px "Noto Sans", sans-serif; }
.tr-han { margin-left: 24px; font-size: 15px; }
.tr-net { width: 16px; height: 16px; margin-left: 23px; }
.tr-vol { width: 16px; height: 12px; margin-left: 9px; }
.tr-clock { display: flex; flex-direction: column; align-items: flex-end; gap: 4px; margin-left: 15px; font-family: "Noto Sans", "Noto Sans CJK KR", sans-serif; font-size: 12px; }
```
